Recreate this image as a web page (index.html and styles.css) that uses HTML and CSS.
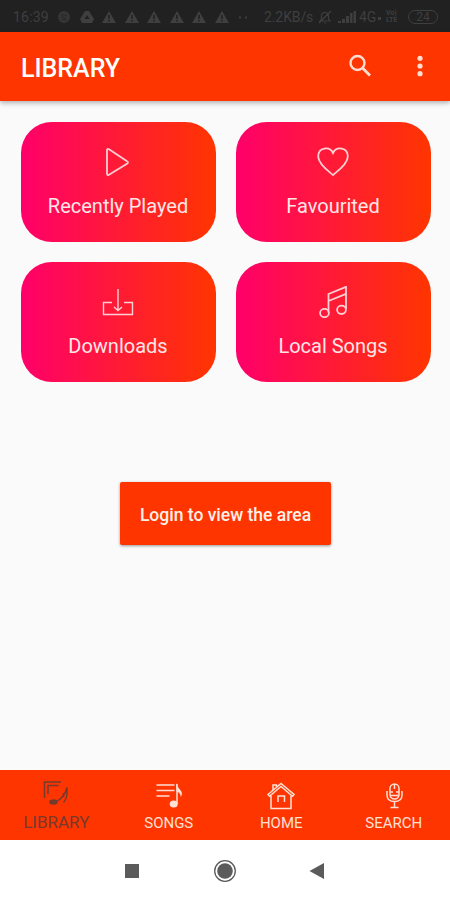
FILE: index.html
```html
<!DOCTYPE html>
<html lang="en">
  <head>
    <meta charset="UTF-8" />
    <meta name="viewport" content="width=device-width, initial-scale=1" />
    <title>Library</title>
    <link rel="stylesheet" href="styles.css">
  </head>
  <body>
    <svg class="symbols" aria-hidden="true">
      <symbol id="warning" viewBox="0 0 14 14">
        <path fill-rule="evenodd" d="M7 1 14 13H0ZM6.2 5v4h1.6V5ZM6.2 10v1.5h1.6V10Z" fill="currentColor" />
      </symbol>
    </svg>
    <div class="phone">
      <div class="status-bar">
        <span class="clock">16:39</span>
        <div class="notices">
          <svg viewBox="0 0 14 14"><circle cx="7" cy="7" r="6" fill="#353535" /><path d="M4 5q3-1 6 1M4 7.5q3-1 5 1M5 10q2-1 4 0" stroke="#272727" fill="none" /></svg>
          <svg viewBox="0 0 14 14"><path fill-rule="evenodd" d="M5 1h4l5 8-2 4H2L0 9ZM7 5 4.5 9h5Z" fill="currentColor" /></svg>
          <svg><use href="#warning" /></svg>
          <svg><use href="#warning" /></svg>
          <svg><use href="#warning" /></svg>
          <svg><use href="#warning" /></svg>
          <svg><use href="#warning" /></svg>
          <svg><use href="#warning" /></svg>
          <svg viewBox="0 0 14 14"><path d="M2 6.5h2v2H2zM8 6.5h2v2H8z" fill="currentColor" /></svg>
        </div>
        <span class="speed">2.2KB/s</span>
        <svg class="mute" viewBox="0 0 14 14"><path d="M2 11h10l-1.5-2V6A3.5 3.5 0 0 0 3.5 6v3ZM6 13h2M1 13 13 1" fill="none" stroke="currentColor" stroke-width="1.2" /></svg>
        <svg class="signal" viewBox="0 0 18 12"><path d="M0 10h3v2H0zM4 8h3v4H4zM8 5h3v7H8zM12 2h2.500v10H12zM15.500 0H18v12h-2.500z" fill="currentColor" /></svg>
        <span class="network">4G<i class="data"></i></span>
        <span class="volte">Vo)<br>LTE</span>
        <span class="battery">24</span>
      </div>

      <div class="app-bar">
        <h1>LIBRARY</h1>
        <svg class="search" viewBox="0 0 24 24"><circle cx="9.500" cy="9" r="7" fill="none" stroke="currentColor" stroke-width="2.400" /><path d="m14.500 14 7.500 7.500" stroke="currentColor" stroke-width="2.800" /></svg>
        <svg class="more" viewBox="0 0 6 22"><circle cx="3" cy="3.3" r="2.6" /><circle cx="3" cy="11" r="2.6" /><circle cx="3" cy="18.7" r="2.6" /></svg>
      </div>

      <div class="content">
        <div class="cards">
          <div class="card">
            <svg viewBox="0 0 32 32"><path d="M5 4.500v23q0 2.400 2 1.200L25 17.700q2-1.200 0-2.400L7 3.300q-2-1.200-2 1.200Z" /></svg>
            <span>Recently Played</span>
          </div>
          <div class="card">
            <svg viewBox="0 0 32 32"><path d="M16 29C11 25 1.200 18 1.200 10.500 1.200 1.500 12.500-.2 16 7 19.500-.2 30.800 1.500 30.800 10.500 30.800 18 21 25 16 29Z" /></svg>
            <span>Favourited</span>
          </div>
          <div class="card">
            <svg class="thin" viewBox="0 0 32 32"><path d="M10 16.500H1.500v12h29v-12H22M16 3v21M12 21l4 3.500 4-3.500" /></svg>
            <span>Downloads</span>
          </div>
          <div class="card">
            <svg viewBox="0 0 32 32"><path d="M11.500 26.500V8L29 .8V23M11.500 15 29 7.800" /><ellipse cx="7.500" cy="27" rx="4.400" ry="4.200" /><ellipse cx="24.500" cy="23.800" rx="4.400" ry="4.200" /></svg>
            <span>Local Songs</span>
          </div>
        </div>
        <button class="login-btn">Login to view the area</button>
      </div>

      <div class="tabs">
        <div class="tab active">
          <svg viewBox="0 0 28 28"><path d="M2.500 19V3h16.500M6 15V6.500h10.500" /><ellipse class="solid" cx="11.500" cy="23" rx="4.300" ry="2.800" /><path d="M15.500 22Q23 17 25 8.500v7Q24.500 20 21.500 23.500M21.500 14v4" /></svg>
          <span>LIBRARY</span>
        </div>
        <div class="tab">
          <svg viewBox="0 0 28 28"><path d="M1.500 3h18M1.500 8.500h18M1.500 14h13M22 2v20" /><ellipse class="solid" cx="18.700" cy="22" rx="4" ry="3.500" /><path class="solid" d="M21.300 1q1 4 4 7 3 3 .5 7 0-4-4.500-6Z" /></svg>
          <span>SONGS</span>
        </div>
        <div class="tab">
          <svg viewBox="0 0 28 28"><path d="M1 12.500 14 1.500l13 11-1.500 1.700L14 4.500 2.500 14.200ZM4 13v13.500h20V13M6 8V3h3.500v2M11 20v-6h6.500v6" /></svg>
          <span>HOME</span>
        </div>
        <div class="tab">
          <svg viewBox="0 0 28 28"><rect x="10" y="2" width="9" height="15" rx="4.500" /><path d="M7 9v4q0 6.500 7.500 6.500T22 13V9M14.500 20v5M10.500 25.500h8M10 10h3M16 10h3M10 13.500h9M14.500 2v5" /></svg>
          <span>SEARCH</span>
        </div>
      </div>

      <div class="system-nav">
        <svg viewBox="0 0 24 24"><path d="M5 5h14v14H5z" /></svg>
        <svg viewBox="0 0 24 24"><circle cx="12" cy="12" r="10.300" fill="none" stroke="#5b5b5b" stroke-width="1.300" /><circle cx="12" cy="12" r="7.800" /></svg>
        <svg viewBox="0 0 24 24"><path d="M3.500 12 18 4v16Z" /></svg>
      </div>
    </div>
  </body>
</html>
```

FILE: styles.css
```css
* {
  box-sizing: border-box;
}
body {
  margin: 0;
  font-family: Roboto, "Liberation Sans", sans-serif;
  background-color: #fafafa;
}
svg {
  display: block;
  flex: none;
}
.symbols {
  position: absolute;
  width: 0;
  height: 0;
}
.phone {
  display: flex;
  flex-direction: column;
  width: 450px;
  height: 900px;
  overflow: hidden;
}

/* status bar */
.status-bar {
  display: flex;
  align-items: center;
  flex: none;
  height: 32px;
  padding: 1px 12px 0 13px;
  background-color: #212121;
  color: #3f3f3f;
  font-size: 14px;
}
.clock {
  width: 44px;
  letter-spacing: 0.2px;
}
.notices {
  display: flex;
  gap: 8.5px;
  width: 207px;
}
.notices svg {
  width: 14px;
  height: 14px;
}
.speed {
  width: 54px;
  letter-spacing: -0.1px;
}
.mute {
  width: 14px;
  height: 14px;
}
.signal {
  width: 18px;
  height: 12px;
  margin: 0 3px 0 6px;
}
.network {
  display: flex;
  align-items: center;
  width: 27px;
}
.data {
  width: 3px;
  height: 3px;
  margin: 3px 0 0 2px;
  background-color: #3f3f3f;
}
.volte {
  width: 22px;
  font-size: 7px;
  font-weight: bold;
  line-height: 7px;
}
.battery {
  width: 30px;
  height: 14px;
  border: 1px solid #3f3f3f;
  border-radius: 7px;
  font-size: 12px;
  line-height: 12px;
  text-align: center;
}

/* title bar */
.app-bar {
  display: flex;
  align-items: center;
  flex: none;
  height: 69px;
  padding: 2px 27px 0 21px;
  background-color: #ff3500;
  color: #ffdccf;
  box-shadow: 0 2px 5px rgba(0, 0, 0, 0.3);
  z-index: 1;
}
.app-bar h1 {
  flex: 1;
  margin: 0;
  padding-top: 2px;
  color: #fff;
  font-size: 25px;
  font-weight: 500;
}
.search {
  width: 24px;
  height: 24px;
  margin: -3px 45px 0 0;
}
.more {
  width: 6px;
  height: 22px;
  margin-top: -3px;
  fill: currentColor;
}

/* library area */
.content {
  display: flex;
  flex-direction: column;
  align-items: center;
  flex: 1;
  padding: 20.5px 0 0 1px;
}
.cards {
  display: grid;
  grid-template-columns: 195px 195px;
  grid-auto-rows: 120px;
  gap: 20px;
}
.card {
  display: flex;
  flex-direction: column;
  align-items: center;
  padding-top: 24px;
  border-radius: 31px;
  background: linear-gradient(to right, #ff006a, #ff3500);
  color: #ffe6e6;
  font-size: 20px;
}
.card svg {
  width: 32px;
  height: 32px;
  fill: none;
  stroke: #ffd0d4;
  stroke-width: 1.8;
}
.card .thin {
  stroke-width: 1.4;
}
.card span {
  margin-top: 16px;
  line-height: 24px;
}
.login-btn {
  width: 211px;
  height: 63px;
  margin-top: 100.5px;
  padding: 2px 0 0;
  border: none;
  border-radius: 2px;
  background-color: #ff3500;
  color: #fff0ea;
  font-family: inherit;
  font-size: 17.5px;
  font-weight: 500;
  box-shadow: 0 1px 3px rgba(0, 0, 0, 0.4);
}

/* bottom tabs */
.tabs {
  display: grid;
  grid-template-columns: repeat(4, 1fr);
  flex: none;
  height: 70px;
  background-color: #ff3500;
  color: #ffe0d5;
}
.tab {
  display: flex;
  flex-direction: column;
  align-items: center;
  padding-top: 12px;
  font-size: 15px;
}
.tab svg {
  width: 28px;
  height: 28px;
  fill: none;
  stroke: currentColor;
  stroke-width: 1.5;
}
.tab .solid {
  fill: currentColor;
  stroke: none;
}
.tab span {
  margin-top: 3px;
  line-height: 20px;
}
.tab.active {
  padding-top: 9px;
  color: #743b2c;
  font-size: 17px;
}
.tab.active span {
  margin-top: 5px;
}

/* android buttons */
.system-nav {
  display: flex;
  justify-content: center;
  gap: 69px;
  flex: none;
  height: 60px;
  padding-top: 19px;
  background-color: #fff;
}
.system-nav svg {
  width: 24px;
  height: 24px;
  fill: #5b5b5b;
}
```
